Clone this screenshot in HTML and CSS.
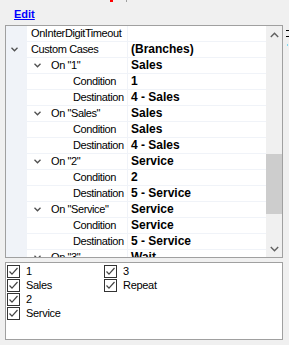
FILE: index.html
```html
<!DOCTYPE html>
<html lang="en">
<head>
    <meta charset="UTF-8">
    <title>Custom Cases</title>
    <link rel="stylesheet" href="styles.css">
</head>
<body>
    <div class="ticks"><span class="tick red"></span><span class="tick gray"></span></div>
    <div class="toolbar"><a href="#" class="edit">Edit</a></div>

    <div class="grid-line">
        <div class="grid">
            <div class="rows">
                <div class="row">
                    <div class="gutter"></div>
                    <div class="name">OnInterDigitTimeout</div>
                    <div class="value"></div>
                </div>
                <div class="row">
                    <div class="gutter"><svg class="twist" width="7" height="5" viewBox="0 0 7 5"><polyline points="0.5,0.8 3.5,3.8 6.5,0.8"/></svg></div>
                    <div class="name">Custom Cases</div>
                    <div class="value">(Branches)</div>
                </div>

                <div class="row">
                    <div class="gutter"></div>
                    <div class="name l1"><svg class="twist" width="7" height="5" viewBox="0 0 7 5"><polyline points="0.5,0.8 3.5,3.8 6.5,0.8"/></svg>On "1"</div>
                    <div class="value">Sales</div>
                </div>
                <div class="row">
                    <div class="gutter"></div>
                    <div class="name l2">Condition</div>
                    <div class="value">1</div>
                </div>
                <div class="row">
                    <div class="gutter"></div>
                    <div class="name l2">Destination</div>
                    <div class="value">4 - Sales</div>
                </div>

                <div class="row">
                    <div class="gutter"></div>
                    <div class="name l1"><svg class="twist" width="7" height="5" viewBox="0 0 7 5"><polyline points="0.5,0.8 3.5,3.8 6.5,0.8"/></svg>On "Sales"</div>
                    <div class="value">Sales</div>
                </div>
                <div class="row">
                    <div class="gutter"></div>
                    <div class="name l2">Condition</div>
                    <div class="value">Sales</div>
                </div>
                <div class="row">
                    <div class="gutter"></div>
                    <div class="name l2">Destination</div>
                    <div class="value">4 - Sales</div>
                </div>

                <div class="row">
                    <div class="gutter"></div>
                    <div class="name l1"><svg class="twist" width="7" height="5" viewBox="0 0 7 5"><polyline points="0.5,0.8 3.5,3.8 6.5,0.8"/></svg>On "2"</div>
                    <div class="value">Service</div>
                </div>
                <div class="row">
                    <div class="gutter"></div>
                    <div class="name l2">Condition</div>
                    <div class="value">2</div>
                </div>
                <div class="row">
                    <div class="gutter"></div>
                    <div class="name l2">Destination</div>
                    <div class="value">5 - Service</div>
                </div>

                <div class="row">
                    <div class="gutter"></div>
                    <div class="name l1"><svg class="twist" width="7" height="5" viewBox="0 0 7 5"><polyline points="0.5,0.8 3.5,3.8 6.5,0.8"/></svg>On "Service"</div>
                    <div class="value">Service</div>
                </div>
                <div class="row">
                    <div class="gutter"></div>
                    <div class="name l2">Condition</div>
                    <div class="value">Service</div>
                </div>
                <div class="row">
                    <div class="gutter"></div>
                    <div class="name l2">Destination</div>
                    <div class="value">5 - Service</div>
                </div>

                <div class="row">
                    <div class="gutter"></div>
                    <div class="name l1"><svg class="twist" width="7" height="5" viewBox="0 0 7 5"><polyline points="0.5,0.8 3.5,3.8 6.5,0.8"/></svg>On "3"</div>
                    <div class="value">Wait</div>
                </div>
            </div>

            <div class="scrollbar">
                <div class="arrow"><svg width="9" height="6" viewBox="0 0 9 6"><polyline points="0.8,5 4.5,1.3 8.2,5"/></svg></div>
                <div class="track"><div class="thumb"></div></div>
                <div class="arrow"><svg width="9" height="6" viewBox="0 0 9 6"><polyline points="0.8,1 4.5,4.7 8.2,1"/></svg></div>
            </div>
        </div>
        <div class="side">
            <span class="dash"></span>
            <span class="dash"></span>
            <span class="dot"></span>
        </div>
    </div>

    <div class="checklist">
        <label class="item"><span class="box"><svg width="11" height="11" viewBox="0 0 11 11"><polyline points="1.5,5.5 4,8.2 9.5,2"/></svg></span>1</label>
        <label class="item"><span class="box"><svg width="11" height="11" viewBox="0 0 11 11"><polyline points="1.5,5.5 4,8.2 9.5,2"/></svg></span>Sales</label>
        <label class="item"><span class="box"><svg width="11" height="11" viewBox="0 0 11 11"><polyline points="1.5,5.5 4,8.2 9.5,2"/></svg></span>2</label>
        <label class="item"><span class="box"><svg width="11" height="11" viewBox="0 0 11 11"><polyline points="1.5,5.5 4,8.2 9.5,2"/></svg></span>Service</label>
        <label class="item"><span class="box"><svg width="11" height="11" viewBox="0 0 11 11"><polyline points="1.5,5.5 4,8.2 9.5,2"/></svg></span>3</label>
        <label class="item"><span class="box"><svg width="11" height="11" viewBox="0 0 11 11"><polyline points="1.5,5.5 4,8.2 9.5,2"/></svg></span>Repeat</label>
    </div>
</body>
</html>
```

FILE: styles.css
```css
body {
    margin: 0;
    background-color: #f0f0f0;
    font-family: "Liberation Sans", Arial, sans-serif;
    font-size: 11px;
    color: #000;
    width: 289px;
    height: 345px;
    overflow: hidden;
}
.ticks {
    height: 2px;
    display: flex;
}
.tick {
    display: block;
    height: 2px;
}
.tick.red {
    width: 3px;
    margin-left: 110px;
    background-color: #ff0000;
}
.tick.gray {
    width: 1px;
    margin-left: 13px;
    background-color: #a0a0a0;
}
.toolbar {
    height: 23px;
    padding-left: 14px;
    box-sizing: border-box;
    padding-top: 6px;
}
.edit {
    color: #0000ff;
    font-weight: bold;
    font-size: 11px;
    text-decoration: underline;
}
.grid-line {
    display: flex;
    padding-left: 5px;
}
.grid {
    width: 278px;
    height: 233px;
    box-sizing: border-box;
    border: 1px solid #a0a0a0;
    display: flex;
    background-color: #fff;
}
.rows {
    width: 260px;
    overflow: hidden;
}
.row {
    display: flex;
    height: 16px;
    box-sizing: border-box;
    border-bottom: 1px solid #f0f3f8;
    line-height: 15px;
}
.gutter {
    width: 21px;
    flex: none;
    background-color: #f0f3f8;
    display: flex;
    align-items: center;
    padding-left: 5px;
    box-sizing: border-box;
}
.twist {
    fill: none;
    stroke: #505050;
    stroke-width: 1.3;
    flex: none;
}
.name {
    width: 101px;
    flex: none;
    box-sizing: border-box;
    padding-left: 4px;
    border-right: 1px solid #f0f3f8;
    letter-spacing: -0.4px;
    white-space: nowrap;
    display: flex;
    align-items: center;
}
.name.l1 {
    padding-left: 7px;
}
.name.l1 .twist {
    margin-right: 10px;
}
.name.l2 {
    padding-left: 46px;
}
.value {
    flex: 1;
    padding-left: 3px;
    font-weight: bold;
    font-size: 12px;
    white-space: nowrap;
    overflow: hidden;
}
.scrollbar {
    width: 16px;
    background-color: #f0f0f0;
    display: flex;
    flex-direction: column;
}
.arrow {
    height: 17px;
    display: flex;
    align-items: center;
    justify-content: center;
}
.arrow svg {
    fill: none;
    stroke: #606060;
    stroke-width: 1.4;
}
.track {
    flex: 1;
    padding-top: 111px;
}
.thumb {
    height: 60px;
    background-color: #cdcdcd;
}
.side {
    display: flex;
    flex-direction: column;
    padding-left: 3px;
    padding-top: 5px;
}
.dash {
    display: block;
    width: 3px;
    height: 1px;
    background-color: #000;
    margin-bottom: 5px;
}
.dot {
    display: block;
    width: 1px;
    height: 2px;
    margin-top: 2px;
    margin-left: 1px;
    background-color: #7fd8ee;
}
.checklist {
    margin: 4px 0 0 5px;
    width: 278px;
    height: 78px;
    box-sizing: border-box;
    border: 1px solid #a0a0a0;
    background-color: #fff;
    padding: 1px 0 0 1px;
    display: grid;
    grid-template-rows: repeat(4, 14px);
    grid-auto-flow: column;
    grid-auto-columns: 97px;
    align-content: start;
}
.item {
    display: flex;
    align-items: center;
    letter-spacing: -0.3px;
    height: 14px;
}
.box {
    width: 13px;
    height: 13px;
    box-sizing: border-box;
    border: 1px solid #333;
    margin-right: 6px;
    display: flex;
    align-items: center;
    justify-content: center;
    flex: none;
}
.box svg {
    fill: none;
    stroke: #444;
    stroke-width: 1.2;
}
```
